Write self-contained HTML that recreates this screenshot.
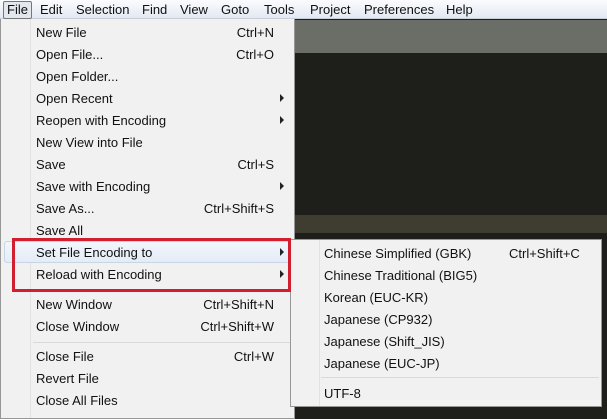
<!DOCTYPE html>
<html><head><style>
*{margin:0;padding:0;box-sizing:border-box}
body{width:607px;height:408px;overflow:hidden;position:relative;background:#1e1f1a;font-family:"Liberation Sans","DejaVu Sans",sans-serif;font-size:13px;color:#111}
.bar{position:absolute;left:0;top:0;width:607px;height:19px;background:linear-gradient(#fbfcfe,#e3e8f2);border-bottom:1px solid #c9cfd8}
.bar span{position:absolute;top:2px}
.file{position:absolute;left:3px;top:1px;width:29px;height:18px;border:1px solid #777;border-radius:2px;background:#e4e8ee}
.gray{position:absolute;left:295px;top:20px;width:312px;height:33px;background:#6b6e67}
.olive{position:absolute;left:295px;top:215px;width:312px;height:18px;background:#3e3d30}
.menu{position:absolute;left:0;top:19px;width:295px;height:400px;background:#f1f1f1;border:1px solid #979797;border-top:none}
.gut{position:absolute;left:29px;top:0;width:1px;height:100%;background:#e2e2e2}
.it{position:absolute;height:22px;line-height:24px;white-space:nowrap}
.sc{position:absolute;right:20px;text-align:right}
.ar{position:absolute;width:0;height:0;border-top:4px solid transparent;border-bottom:4px solid transparent;border-left:4px solid #222}
.sep{position:absolute;height:1px;background:#d8d8d8}
.hl{position:absolute;left:3px;top:222px;width:288px;height:22px;border:1px solid #c9d4e4;border-radius:3px;background:linear-gradient(#f2f6fc,#e4ecf7)}
.red{position:absolute;left:12px;top:238px;width:279px;height:54px;border:3px solid #d11f30;z-index:5}
.sub{position:absolute;left:290px;top:239px;width:312px;height:168px;background:#f1f1f1;border:1px solid #979797;z-index:4}
</style></head><body>
<div class="bar">
<div class="file"></div>
<span style="left:7px">File</span><span style="left:40px">Edit</span><span style="left:76px">Selection</span><span style="left:142px">Find</span><span style="left:180px">View</span><span style="left:221px">Goto</span><span style="left:264px">Tools</span><span style="left:310px">Project</span><span style="left:364px">Preferences</span><span style="left:446px">Help</span>
</div>
<div class="gray"></div><div class="olive"></div>
<div class="menu">
<div class="gut"></div>
<div class="hl"></div>
<div class="it" style="left:35px;top:2px">New File</div><div class="it sc" style="top:2px">Ctrl+N</div>
<div class="it" style="left:35px;top:24px">Open File...</div><div class="it sc" style="top:24px">Ctrl+O</div>
<div class="it" style="left:35px;top:46px">Open Folder...</div>
<div class="it" style="left:35px;top:68px">Open Recent</div><div class="ar" style="left:279px;top:75px"></div>
<div class="it" style="left:35px;top:90px">Reopen with Encoding</div><div class="ar" style="left:279px;top:97px"></div>
<div class="it" style="left:35px;top:112px">New View into File</div>
<div class="it" style="left:35px;top:134px">Save</div><div class="it sc" style="top:134px">Ctrl+S</div>
<div class="it" style="left:35px;top:156px">Save with Encoding</div><div class="ar" style="left:279px;top:163px"></div>
<div class="it" style="left:35px;top:178px">Save As...</div><div class="it sc" style="top:178px">Ctrl+Shift+S</div>
<div class="it" style="left:35px;top:200px">Save All</div>
<div class="it" style="left:35px;top:222px">Set File Encoding to</div><div class="ar" style="left:279px;top:229px"></div>
<div class="it" style="left:35px;top:244px">Reload with Encoding</div><div class="ar" style="left:279px;top:251px"></div>
<div class="sep" style="left:32px;width:258px;top:271px"></div>
<div class="it" style="left:35px;top:274px">New Window</div><div class="it sc" style="top:274px">Ctrl+Shift+N</div>
<div class="it" style="left:35px;top:296px">Close Window</div><div class="it sc" style="top:296px">Ctrl+Shift+W</div>
<div class="sep" style="left:32px;width:258px;top:323px"></div>
<div class="it" style="left:35px;top:326px">Close File</div><div class="it sc" style="top:326px">Ctrl+W</div>
<div class="it" style="left:35px;top:348px">Revert File</div>
<div class="it" style="left:35px;top:370px">Close All Files</div>
</div>
<div class="red"></div>
<div class="sub">
<div class="gut" style="left:28px"></div>
<div class="it" style="left:33px;top:2px">Chinese Simplified (GBK)</div><div class="it" style="left:218px;top:2px">Ctrl+Shift+C</div>
<div class="it" style="left:33px;top:24px">Chinese Traditional (BIG5)</div>
<div class="it" style="left:33px;top:46px">Korean (EUC-KR)</div>
<div class="it" style="left:33px;top:68px">Japanese (CP932)</div>
<div class="it" style="left:33px;top:90px">Japanese (Shift_JIS)</div>
<div class="it" style="left:33px;top:112px">Japanese (EUC-JP)</div>
<div class="sep" style="left:30px;width:278px;top:137px"></div>
<div class="it" style="left:33px;top:142px">UTF-8</div>
</div>
</body></html>
